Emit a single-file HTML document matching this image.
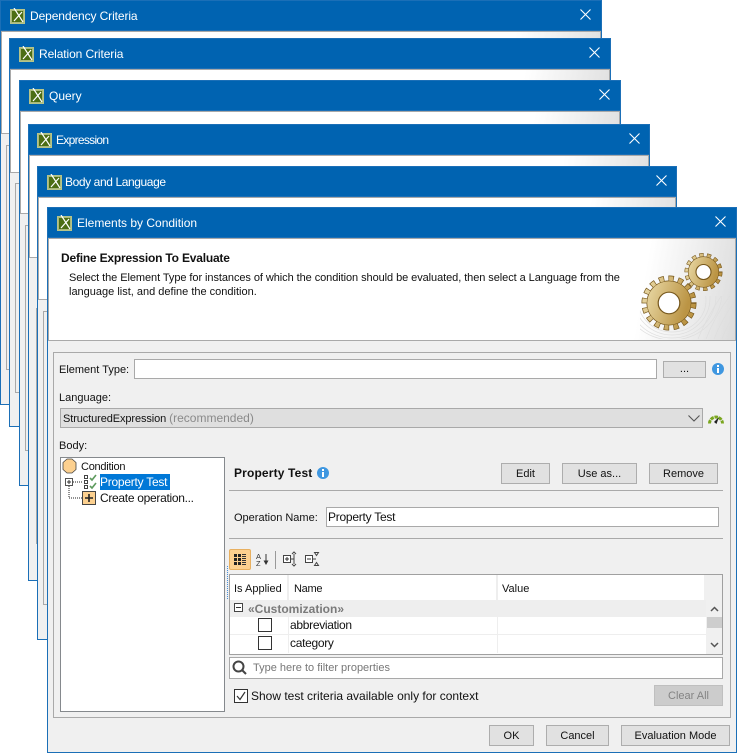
<!DOCTYPE html>
<html><head><meta charset="utf-8"><style>
html,body{margin:0;padding:0;background:#fff}
body{width:737px;height:753px;position:relative;overflow:hidden;font:12px "Liberation Sans",sans-serif;color:#111}
.w{position:absolute;box-sizing:border-box;background:#f0f0f0;border:1px solid #1b6fb7;border-top:0}
.tb{position:absolute;left:-1px;right:-1px;top:0;height:31px;background:#0063b1;border:1px solid #1b6fb7;box-sizing:border-box}
.h{position:absolute;left:0;right:0;top:31px;box-sizing:border-box;border:1px solid #a9a9a9;background:linear-gradient(100deg,#fff calc(100% - 100px),#dcdcdc 100%)}
.p{position:absolute;box-sizing:border-box;border:1px solid #a9a9a9;left:5px;right:5px}
.a{position:absolute;white-space:nowrap}
.t{color:#fff;top:9px;line-height:14px}
.b{position:absolute;box-sizing:border-box;background:#e1e1e1;border:1px solid #adadad;text-align:center;color:#111;font-size:11px}
.i{position:absolute;box-sizing:border-box;background:#fff;border:1px solid #a9a9a9}
.l{position:absolute;white-space:nowrap;line-height:14px}
.s{font-size:11px}
.c{position:absolute;box-sizing:border-box;width:14px;height:14px;border:1px solid #333;background:#fff}
</style></head><body>
<svg width="0" height="0" style="position:absolute"><defs>
<symbol id="ic" viewBox="0 0 16 16"><rect x=".5" y="1.500" width="14" height="14" fill="#a8b87a" stroke="#b5c48a"/><rect x="2" y="3" width="11" height="11" fill="#4c6e14"/><path d="M4 0l9 14M12 4L4 13" stroke="#fff" stroke-width="1.200" fill="none"/></symbol>
<symbol id="x" viewBox="0 0 11 11"><path d="M.5.5l10 10M10.500.5l-10 10" stroke="#fff" stroke-width="1.100" fill="none"/></symbol>
<symbol id="inf" viewBox="0 0 12 12"><circle cx="6" cy="6" r="6" fill="#3f97e0"/><rect x="5" y="2" width="2" height="2" fill="#fff"/><rect x="5" y="5" width="2" height="5" fill="#fff"/></symbol>
<linearGradient id="g" x1="0" y1="0" x2="1" y2="0.300"><stop offset="0" stop-color="#e9d9a6"/><stop offset="1" stop-color="#bb9444"/></linearGradient>
<clipPath id="cl"><rect x="640" y="296" width="95" height="43"/></clipPath>
</defs></svg>

<div class="w" style="left:0;top:0;width:602px;height:405px"><div class="tb"></div><div class="h" style="height:103px"></div><div class="p" style="top:145px;height:225px"></div>
<svg class="a" style="left:9px;top:8px" width="16" height="16"><use href="#ic"/></svg><div class="a t" style="left:29px;letter-spacing:-.1px">Dependency Criteria</div><svg class="a" style="left:579px;top:9px" width="11" height="11"><use href="#x"/></svg></div>

<div class="w" style="left:9px;top:38px;width:602px;height:389px"><div class="tb"></div><div class="h" style="height:104px"></div><div class="p" style="top:145px;height:210px"></div>
<svg class="a" style="left:9px;top:8px" width="16" height="16"><use href="#ic"/></svg><div class="a t" style="left:29px;letter-spacing:-.1px">Relation Criteria</div><svg class="a" style="left:579px;top:9px" width="11" height="11"><use href="#x"/></svg></div>

<div class="w" style="left:19px;top:80px;width:602px;height:406px"><div class="tb"></div><div class="h" style="height:103px"></div><div class="p" style="top:145px;height:226px"></div>
<svg class="a" style="left:9px;top:8px" width="16" height="16"><use href="#ic"/></svg><div class="a t" style="left:29px">Query</div><svg class="a" style="left:579px;top:9px" width="11" height="11"><use href="#x"/></svg></div>

<div class="w" style="left:28px;top:124px;width:622px;height:457px"><div class="tb"></div><div class="h" style="height:103px"></div><div class="p" style="top:184px;height:236px;left:7px"></div>
<svg class="a" style="left:8px;top:8px" width="16" height="16"><use href="#ic"/></svg><div class="a t" style="left:27px;letter-spacing:-.7px">Expression</div><svg class="a" style="left:600px;top:9px" width="11" height="11"><use href="#x"/></svg></div>

<div class="w" style="left:37px;top:166px;width:640px;height:474px"><div class="tb"></div><div class="h" style="height:103px"></div><div class="p" style="top:145px;height:294px"></div>
<svg class="a" style="left:9px;top:8px" width="16" height="16"><use href="#ic"/></svg><div class="a t" style="left:27px;letter-spacing:-.4px">Body and Language</div><svg class="a" style="left:618px;top:9px" width="11" height="11"><use href="#x"/></svg></div>

<div class="w" style="left:47px;top:207px;width:690px;height:546px"><div class="tb"></div><div class="h" style="height:103px"></div>
<svg class="a" style="left:9px;top:8px" width="16" height="16"><use href="#ic"/></svg><div class="a t" style="left:29px">Elements by Condition</div><svg class="a" style="left:667px;top:9px" width="11" height="11"><use href="#x"/></svg></div>

<!-- header art -->
<svg class="a" style="left:620px;top:240px" width="115" height="99" viewBox="620 240 115 99">
<g fill="none" stroke="#dedede" stroke-width=".7" clip-path="url(#cl)"><ellipse cx="672" cy="300" rx="34" ry="32"/><ellipse cx="672" cy="298" rx="38" ry="37"/><ellipse cx="672" cy="296" rx="44" ry="42"/><ellipse cx="672" cy="292" rx="50" ry="48"/><path d="M698 339q12-30 37-62M706 339q10-26 29-50M714 339q8-20 21-38M722 339q5-14 13-24M730 339q2-5 5-9"/></g>
<g>
<circle cx="669" cy="303" r="24.500" fill="none" stroke="#76571c" stroke-width="6" pathLength="16" stroke-dasharray=".56 .44"/>
<circle cx="669" cy="303" r="22.500" fill="#76571c"/>
<circle cx="669" cy="303" r="24.500" fill="none" stroke="url(#g)" stroke-width="4.600" pathLength="16" stroke-dasharray=".42 .58" stroke-dashoffset="-.07"/>
<circle cx="669" cy="303" r="21.800" fill="url(#g)"/>
<circle cx="669" cy="303" r="10.800" fill="#fff" stroke="#76571c" stroke-width="1.200"/>
</g>
<g>
<circle cx="703.500" cy="272" r="17" fill="none" stroke="#76571c" stroke-width="4" pathLength="14" stroke-dasharray=".56 .44"/>
<circle cx="703.500" cy="272" r="15.600" fill="#76571c"/>
<circle cx="703.500" cy="272" r="17" fill="none" stroke="url(#g)" stroke-width="2.800" pathLength="14" stroke-dasharray=".42 .58" stroke-dashoffset="-.07"/>
<circle cx="703.500" cy="272" r="15" fill="url(#g)"/>
<circle cx="703.500" cy="272" r="7.500" fill="#fff" stroke="#76571c" stroke-width="1.100"/>
</g></svg>
<div class="a" style="left:61px;top:251px;font-weight:bold;line-height:14px;letter-spacing:-.2px">Define Expression To Evaluate</div>
<div class="a s" style="left:69px;top:271px;line-height:14px;letter-spacing:-.07px">Select the Element Type for instances of which the condition should be evaluated, then select a Language from the</div>
<div class="a s" style="left:69px;top:285px;line-height:14px">language list, and define the condition.</div>

<!-- panel -->
<div class="a" style="left:53px;top:352px;width:678px;height:366px;box-sizing:border-box;border:1px solid #a9a9a9"></div>
<div class="l s" style="left:59px;top:363px">Element Type:</div>
<div class="i" style="left:134px;top:359px;width:523px;height:20px"></div>
<div class="b" style="left:663px;top:361px;width:43px;height:17px;line-height:15px">...</div>
<svg class="a" style="left:712px;top:363px" width="12" height="12"><use href="#inf"/></svg>
<div class="l s" style="left:59px;top:391px">Language:</div>
<div class="a" style="left:60px;top:408px;width:643px;height:20px;box-sizing:border-box;background:#dfdfdf;border:1px solid #a9a9a9"></div>
<div class="l s" style="left:63px;top:411px;letter-spacing:-.1px">StructuredExpression <span style="color:#8a8a8a;font-size:12px;letter-spacing:0">(recommended)</span></div>
<svg class="a" style="left:688px;top:415px" width="12" height="7"><path d="M.5.500l5.500 5.500 5.500-5.500" fill="none" stroke="#555" stroke-width="1.100"/></svg>
<svg class="a" style="left:707px;top:412px" width="18" height="13" viewBox="0 0 18 13"><path d="M2.500 11.500a6.500 6.500 0 0 1 13 0" fill="none" stroke="#7aa61e" stroke-width="3" stroke-dasharray="3.500 .8"/><path d="M7 10l5-5-2.500 7z" fill="#222"/></svg>
<div class="l s" style="left:59px;top:439px">Body:</div>

<!-- tree -->
<div class="a" style="left:60px;top:457px;width:165px;height:255px;box-sizing:border-box;background:#fff;border:1px solid #85898d"></div>
<svg class="a" style="left:62px;top:458px" width="40" height="48" viewBox="0 0 40 48">
<path d="M5 1h5l4 3.500v7L10 15H5l-4-3.500v-7z" fill="#fcd08f" stroke="#444" stroke-width=".8" stroke-linejoin="round"/>
<path d="M11 24h9M7 28v12h13" stroke="#222" stroke-dasharray="1 1" fill="none"/>
<rect x="3.500" y="20.500" width="7" height="7" fill="#fff" stroke="#555"/><path d="M5 24h4M7 22v4" stroke="#333"/>
<g fill="#fff" stroke="#444"><rect x="22.500" y="17.500" width="3" height="3"/><rect x="22.500" y="22.500" width="3" height="3"/><rect x="22.500" y="27.500" width="3" height="3"/></g>
<path d="M28 20l2 2 4-5M28 28l2 2 4-5" fill="none" stroke="#5d9a5d" stroke-width="1.600"/>
<rect x="20.500" y="33.500" width="13" height="13" fill="#fcd08f" stroke="#444"/><path d="M23 40h8M27 36v8" stroke="#222" stroke-width="1.600"/>
</svg>
<div class="l s" style="left:81px;top:460px;letter-spacing:-.25px">Condition</div>
<div class="a" style="left:100px;top:474px;width:70px;height:16px;background:#0078d7"></div>
<div class="l" style="left:100px;top:475px;color:#fff;letter-spacing:-.25px">Property Test</div>
<div class="l" style="left:100px;top:491px;letter-spacing:-.3px">Create operation...</div>

<!-- right side -->
<div class="l" style="left:234px;top:466px;font-weight:bold;letter-spacing:.15px">Property Test</div>
<svg class="a" style="left:317px;top:467px" width="12" height="12"><use href="#inf"/></svg>
<div class="b" style="left:501px;top:463px;width:49px;height:21px;line-height:20px">Edit</div>
<div class="b" style="left:562px;top:463px;width:75px;height:21px;line-height:20px">Use as...</div>
<div class="b" style="left:649px;top:463px;width:69px;height:21px;line-height:20px">Remove</div>
<div class="a" style="left:229px;top:490px;width:494px;height:1px;background:#a9a9a9"></div>
<div class="l s" style="left:234px;top:511px">Operation Name:</div>
<div class="i" style="left:326px;top:507px;width:393px;height:20px;padding-left:1px;line-height:18px;letter-spacing:-.25px">Property Test</div>
<div class="a" style="left:229px;top:538px;width:494px;height:1px;background:#a9a9a9"></div>

<!-- toolbar -->
<div class="a" style="left:229px;top:549px;width:22px;height:21px;box-sizing:border-box;background:#fcd08f;border:1px solid #e8b060;border-radius:2px"></div>
<svg class="a" style="left:229px;top:549px" width="110" height="21" viewBox="0 0 110 21">
<g fill="#222"><rect x="5" y="5" width="3" height="3"/><rect x="9" y="5" width="3" height="3"/><rect x="5" y="9" width="3" height="3"/><rect x="9" y="9" width="3" height="3"/><rect x="5" y="13" width="3" height="3"/><rect x="9" y="13" width="3" height="3"/></g>
<path d="M13 5.500h4M13 7.500h4M13 9.500h4M13 11.500h4M13 13.500h4M13 15.500h4" stroke="#333"/>
<path d="M37 5v9" stroke="#333" fill="none"/><path d="M34.500 11.500h5L37 16z" fill="#333"/>
<text x="27" y="10" font-size="7.500" font-family="Liberation Sans" fill="#333">A</text><text x="27" y="17" font-size="7.500" font-family="Liberation Sans" fill="#333">Z</text>
<rect x="46" y="2" width="1" height="18" fill="#999"/>
<g fill="#fff" stroke="#444"><rect x="54.500" y="6.500" width="7" height="7"/><rect x="76.500" y="6.500" width="7" height="7"/></g>
<path d="M56 10h4M58 8v4M78 10h4" stroke="#333"/>
<path d="M62 10h3M65 5v10M63 5l2-2 2 2M63 15l2 2 2-2M84 10h3M85.500 3.500h4l-2 3zM85.500 16.500h4l-2-3z" stroke="#444" fill="none"/>
</svg>
<div class="a" style="left:227px;top:566px;height:33px;border-left:1px dotted #4a90d9"></div>

<!-- table -->
<div class="a" style="left:229px;top:574px;width:494px;height:81px;box-sizing:border-box;background:#fff;border:1px solid #a0a0a0"></div>
<div class="a" style="left:704px;top:575px;width:18px;height:25px;background:#f0f0f0"></div>
<div class="a" style="left:287px;top:575px;width:2px;height:25px;background:#eee"></div>
<div class="a" style="left:496px;top:575px;width:2px;height:25px;background:#eee"></div>
<div class="l s" style="left:234px;top:582px">Is Applied</div>
<div class="l s" style="left:294px;top:582px;letter-spacing:-.3px">Name</div>
<div class="l s" style="left:502px;top:582px">Value</div>
<div class="a" style="left:230px;top:600px;width:476px;height:17px;background:#eeeeee"></div>
<svg class="a" style="left:234px;top:603px" width="10" height="10"><rect x=".5" y=".5" width="8" height="8" fill="#fff" stroke="#444"/><path d="M2 4.500h5" stroke="#333"/></svg>
<div class="l" style="left:248px;top:602px;font-weight:bold;color:#7a7a7a">«Customization»</div>
<div class="a" style="left:230px;top:634px;width:476px;height:1px;background:#eee"></div>
<div class="a" style="left:288px;top:617px;width:1px;height:36px;background:#eee"></div>
<div class="a" style="left:497px;top:617px;width:1px;height:36px;background:#eee"></div>
<div class="c" style="left:258px;top:618px"></div><div class="c" style="left:258px;top:636px"></div>
<div class="l" style="left:290px;top:618px;letter-spacing:-.3px">abbreviation</div>
<div class="l" style="left:290px;top:636px;letter-spacing:-.3px">category</div>
<div class="a" style="left:706px;top:600px;width:16px;height:54px;background:#f0f0f0"></div>
<div class="a" style="left:707px;top:617px;width:15px;height:11px;background:#cdcdcd"></div>
<svg class="a" style="left:710px;top:606px" width="9" height="6"><path d="M1 5l3.500-3.500L8 5" fill="none" stroke="#555" stroke-width="1.500"/></svg>
<svg class="a" style="left:710px;top:642px" width="9" height="6"><path d="M1 1l3.500 3.500L8 1" fill="none" stroke="#555" stroke-width="1.500"/></svg>

<!-- filter -->
<div class="i" style="left:229px;top:657px;width:494px;height:22px"></div>
<svg class="a" style="left:232px;top:660px" width="16" height="16"><circle cx="6.500" cy="6.500" r="5" fill="none" stroke="#444" stroke-width="2"/><path d="M10 10l4 4" stroke="#444" stroke-width="2"/></svg>
<div class="l s" style="left:253px;top:661px;color:#777">Type here to filter properties</div>
<div class="c" style="left:234px;top:689px"></div>
<svg class="a" style="left:235px;top:690px" width="12" height="12"><path d="M2 6l3 3.500L10 2" fill="none" stroke="#333" stroke-width="1.200"/></svg>
<div class="l" style="left:251px;top:689px">Show test criteria available only for context</div>
<div class="b" style="left:654px;top:685px;width:69px;height:21px;line-height:20px;background:#cccccc;border-color:#bfbfbf;color:#838383">Clear All</div>
<div class="b" style="left:489px;top:725px;width:45px;height:21px;line-height:20px">OK</div>
<div class="b" style="left:546px;top:725px;width:63px;height:21px;line-height:20px">Cancel</div>
<div class="b" style="left:621px;top:725px;width:109px;height:21px;line-height:20px">Evaluation Mode</div>
</body></html>
